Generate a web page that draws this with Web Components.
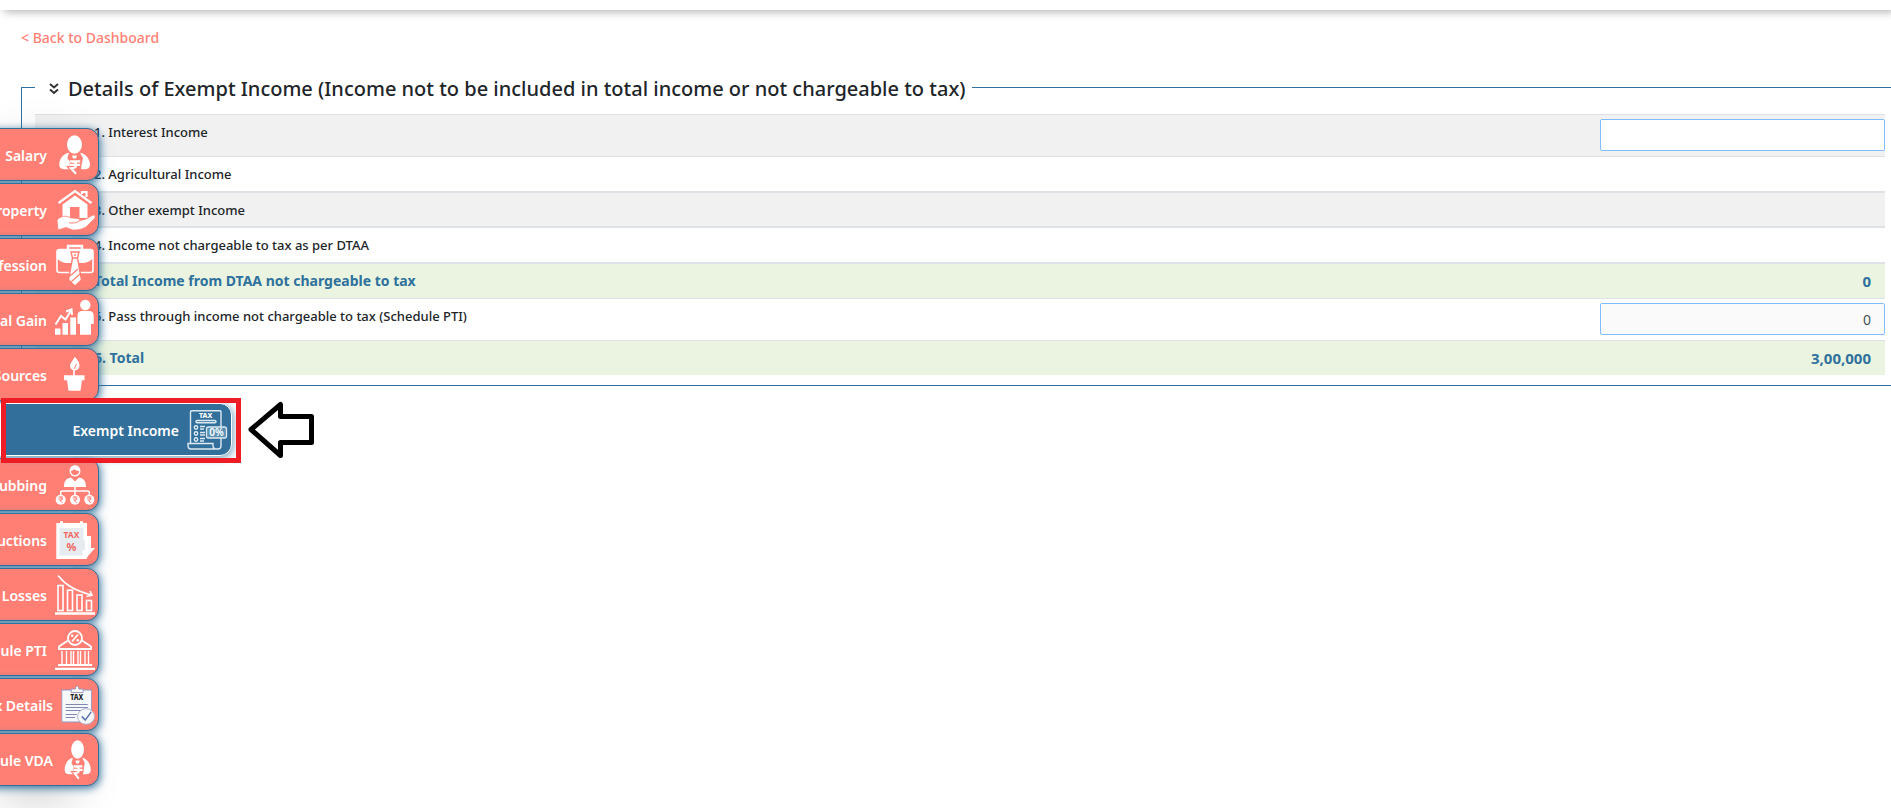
<!DOCTYPE html>
<html lang="en">
<head>
<meta charset="utf-8">
<meta name="viewport" content="width=device-width, initial-scale=1">
<title>Exempt Income</title>
<style>
  :root { --blue: #2f719d; --coral: #ff7f74; --ink: #212529; --line: #dee2e6; }
  body { margin: 0; background: #fff; color: var(--ink); font: 500 14px/20px "Noto Sans", "Open Sans", sans-serif; overflow-x: hidden; }
</style>
</head>
<body>
<tax-page>
  <top-strip slot="header"></top-strip>
  <back-link slot="back">&lt; Back to Dashboard</back-link>
  <income-section>
    <span slot="title">Details of Exempt Income (Income not to be included in total income or not chargeable to tax)</span>
    <income-table></income-table>
  </income-section>
  <side-nav slot="nav">
    <nav-tab icon="salary">Salary</nav-tab>
    <nav-tab icon="house">House Property</nav-tab>
    <nav-tab icon="business">Business/Profession</nav-tab>
    <nav-tab icon="gain">Capital Gain</nav-tab>
    <nav-tab icon="sources">Other Sources</nav-tab>
    <nav-tab icon="exempt" active>Exempt Income</nav-tab>
    <nav-tab icon="clubbing">Clubbing</nav-tab>
    <nav-tab icon="deductions">Deductions</nav-tab>
    <nav-tab icon="losses">Losses</nav-tab>
    <nav-tab icon="pti">Schedule PTI</nav-tab>
    <nav-tab icon="details" narrow>Tax Details</nav-tab>
    <nav-tab icon="salary" narrow>Schedule VDA</nav-tab>
  </side-nav>
</tax-page>

<script>
const define = (name, html, setup) => {
  const tpl = document.createElement('template');
  tpl.innerHTML = html;
  customElements.define(name, class extends HTMLElement {
    constructor() {
      super();
      this.attachShadow({ mode: 'open' }).append(tpl.content.cloneNode(true));
    }
    connectedCallback() { if (setup) setup(this, this.shadowRoot); }
  });
};

const ICONS = {
  salary: `
    <g fill="#fff"><ellipse cx="19.500" cy="9.500" rx="7.500" ry="9.300"/>
    <path d="M14 17.800C8 19 4.300 24 4.300 30c0 3 2.500 4.300 6 4.300h4l1-7-3-4zM25 17.800c6 1.200 10 6.200 10 12.200 0 3-2.500 4.300-6 4.300h-3l1-7 1-4z"/>
    <path d="M17 20.500h5l-1 3h-3z"/></g>
    <path d="M14.800 26.300h10.400M14.800 29.800h10.400M16 26.300c7 0 7 7 0 7l5 5.500" fill="none" stroke="#ff7f74" stroke-width="4.500"/>
    <path d="M14.800 26.300h10.400M14.800 29.800h10.400M16 26.300c7 0 7 7 0 7l5 5.500" fill="none" stroke="#fff" stroke-width="2.200"/>`,
  house: `
    <g fill="none" stroke="#fff" stroke-width="2.200"><path d="M3.500 13 20 1.200 36.500 13"/><path d="M27 4V2h4.500v5"/></g>
    <path fill="#fff" fill-rule="evenodd" d="M7.500 14.500 20 5.500l12.500 9V28h-25zM15 17v11h9.500V17z"/>
    <path fill="#fff" stroke="#ff7f74" stroke-width=".8" d="M2 30c4-4.500 9-4.500 13-2.500 3 1.500 10-.5 10 3l6-1.500 6-3.500c3-1.500 4 1 2.500 3l-8 8c-2 2-9 4-14 3.500L11 37.500 3 40z"/>
    <path d="M14 32.500c4 1.500 8 0 11-2" fill="none" stroke="#ff7f74"/>`,
  business: `
    <g fill="none" stroke="#fff" stroke-width="1.600"><rect x="2" y="4.500" width="36" height="23" rx="2.500"/><path d="M13 4.500V1h14v3.500" stroke-width="2.400"/></g>
    <path fill="#fff" d="M2 7c0-2 1-2.500 3-2.500h30c2 0 3 .5 3 2.500v6c-2 3-7 5-11 5H13C8 18 4 16 2 13z"/>
    <path fill="#fff" stroke="#ff7f74" stroke-width="1.400" d="m16 7 8 0-1.500 6 4 22-6.500 6-6.500-6 4-22z"/>
    <path fill="none" stroke="#ff7f74" stroke-width="1.300" d="M17.500 13h5M15 31l8-7M16 37l9-8"/><circle cx="20" cy="10" r="1" fill="#ff7f74"/>`,
  gain: `
    <g fill="#fff"><circle cx="30.300" cy="5" r="5.200"/><path d="M27 11h7q4.700 0 4.700 5v8H36v10.700h-11V24h-2.500v-8q0-5 4.500-5zM0 28.500h5.500v6.200H0zM7.500 23h5.500v11.700H7.500zM15.300 17.500H21v17.200h-5.700z"/></g>
    <path d="M.5 24.500 6 16l4.500 3.500L16 10.500M11 11.500l5.500-2 .5 5.500" fill="none" stroke="#fff" stroke-width="2"/>`,
  sources: `
    <g fill="#fff"><path d="M9 20.300h20.500v5H9zM12 25h15l-1.500 10.700h-12z"/><path d="M19.700 1.800c3.300 3.700 5 6.200 4.800 9-.2 3-2 4.600-4.800 4.600s-4.800-2-4.600-4.800c.2-3.200 3.600-5.600 4.600-8.800z"/></g>
    <path d="M19 21v-7l2.500-5" stroke="#fff" stroke-width="1.600" fill="none"/><path d="m19 14 2.500-5" stroke="#ff7f74" fill="none"/>`,
  exempt: `
    <g fill="none" stroke="#dce9f2" stroke-width="1.400"><path d="M3.500 33.500V2q0-1.300 1.300-1.300h28Q34 .7 34 2v15M34 27v9q0 3-3 3H4q-3 0-3-3.500v-2h25v2q0 3.500 3 3.500"/>
    <rect x="9" y="10.500" width="20" height="2.300" rx="1.100"/>
    <circle cx="9" cy="17.500" r="1.700"/><circle cx="9" cy="23.500" r="1.700"/><circle cx="9" cy="29.500" r="1.700"/>
    <path d="M13 16.500h5M13 19h4M13 22.500h5M13 25h5M13 28.500h5M13 31h4"/></g>
    <rect x="19.500" y="17" width="20" height="11" rx="2" fill="#5c91b5" stroke="#dce9f2" stroke-width="1.300"/>
    <text x="18.700" y="8.300" font-size="7" font-weight="800" text-anchor="middle" fill="#fff">TAX</text>
    <text x="29.500" y="26" font-size="10" font-weight="600" text-anchor="middle" fill="#fff">0%</text>`,
  clubbing: `
    <path fill="#fff" d="M9 22c0-6 2-8.500 7-9.500l4 4 4-4c5 1 7 3.500 7 9.500z"/>
    <circle cx="20" cy="6" r="4.800" fill="#ff7f74" stroke="#fff" stroke-width="1.400"/><path fill="#fff" d="M15 6c0-4 2-5.500 5-5.500S25 2 25 6c-3 0-5-1-6-2-1 1.500-2 2-4 2z"/>
    <path d="M20 21v9M5.700 30v-2.500q0-1.500 2-1.500h24.600q2 0 2 1.500V30M16 14l4 6 4-6" fill="none" stroke="#fff" stroke-width="1.500"/>
    <g fill="#fff"><circle cx="5.700" cy="34.800" r="5"/><circle cx="20" cy="34.800" r="5"/><circle cx="34.300" cy="34.800" r="5"/></g>
    <path d="M3.500 32h4.500M3.500 34h4.500M5 32c3 0 3 3.500 0 3.500l2.500 2.500M17.800 32h4.500M17.800 34h4.500M19.300 32c3 0 3 3.500 0 3.500l2.500 2.500M32 32h4.500M32 34h4.500M33.500 32c3 0 3 3.500 0 3.500L36 38" fill="none" stroke="#ff7f74"/>`,
  deductions: `
    <path fill="#fff" d="M1.300 3H5V1.300h3V3h17V1.300h3V3h4v13h4v12h4l-7 8-1.500 3H1.300z"/>
    <path fill="#e6ebf0" d="M4.500 8h24v12l1.500 1v9h-2.500v5.500h-23z"/>
    <g fill="#f0685f" text-anchor="middle" font-weight="700"><text x="16.500" y="18" font-size="8.500">TAX</text><text x="16.500" y="31" font-size="11">%</text></g>`,
  losses: `
    <g fill="none" stroke="#fff" stroke-width="1.600"><rect x="3" y="10.500" width="5" height="25"/><rect x="12.500" y="15.200" width="5" height="20.300"/><rect x="22" y="20" width="5" height="15.500"/><rect x="31.500" y="25.500" width="5" height="10"/>
    <path d="M3 .5c8 10 17 15 33 19.500M31.500 21.500 37 20.300 35 16"/></g>
    <path stroke="#fff" stroke-width="2.600" d="M0 38.500h40"/>`,
  pti: `
    <g fill="none" stroke="#fff" stroke-width="1.800"><path d="M13 10.500 4 16.500v2.500h32v-2.500l-9-6"/><circle cx="20" cy="8" r="7"/><path d="m17 11.500 6-7M3 35h34"/>
    <path d="M7 21v13M11.500 21v13M16 21v13M18.500 21v13M23 21v13M25.500 21v13M30 21v13M33.500 21v13" stroke-width="1.400"/></g>
    <circle cx="17.200" cy="5.800" r="1.300" fill="#fff"/><circle cx="22.800" cy="10.300" r="1.300" fill="#fff"/><path stroke="#fff" stroke-width="2.200" d="M0 38.800h40"/>`,
  details: `
    <rect x="1" y="5" width="35" height="32" fill="#f7f8fc" stroke="#9298bd" stroke-width="1"/>
    <path d="M12 7.500V4h5q0-3 2-3t2 3h5v3.500z" fill="#fff" stroke="#9298bd"/>
    <text x="18.500" y="15.500" font-size="8" font-weight="800" text-anchor="middle" fill="#222">TAX</text>
    <path d="M5.500 19.500h26M5.500 22.500h26M5.500 25.500h26M5.500 29.500h13M5.500 32.500h11" stroke="#8188b2" stroke-width="1.200"/>
    <ellipse cx="29.500" cy="31.500" rx="10" ry="7.800" fill="#f7f8fc" stroke="#a9aecb"/><path d="m24.500 31.500 4 3.500 7-8" fill="none" stroke="#5f79ad" stroke-width="1.700"/>`
};

define('tax-page', `
  <style>
    :host { display: block; position: relative; min-height: 100vh; overflow: hidden; }
    main { padding-left: 21px; margin-top: 18px; }
    .body { margin-top: 22px; }
  </style>
  <slot name="header"></slot>
  <main><slot name="back"></slot><div class="body"><slot></slot></div></main>
  <slot name="nav"></slot>`);

define('top-strip', `
  <style>:host { display: block; height: 10px; background: #fff; box-shadow: 4px 2px 8px rgba(0,0,0,.3); }</style>`);

define('back-link', `
  <style>:host { display: block; } a { color: var(--coral); text-decoration: none; }</style>
  <a href="#"><slot></slot></a>`);

define('income-section', `
  <style>
    :host { display: block; }
    fieldset { margin: 0 -8px 0 0; min-width: 0; border: 1px solid var(--blue); padding: 10px 13px 10px 13px; }
    legend { display: flex; align-items: center; gap: 9px; padding: 4px 7px 0 14px; font-size: 20px; line-height: 30px; }
    button { border: 0; padding: 0; background: none; color: inherit; display: flex; }
  </style>
  <fieldset>
    <legend>
      <button type="button" aria-label="Collapse section"><svg width="10" height="12" viewBox="0 0 10 12" fill="none" stroke="#333" stroke-width="2"><path d="m1 1 4 3.500L9 1M1 6.500 5 10l4-3.500"/></svg></button>
      <slot name="title"></slot>
    </legend>
    <slot></slot>
  </fieldset>`);

define('income-table', `
  <style>
    :host { display: block; }
    table { width: 100%; border-spacing: 0; border-collapse: separate; }
    th, td { padding: 7px 0; border-top: 1px solid var(--line); text-align: left; font-size: 13px; font-weight: 500; vertical-align: top; }
    th { padding-left: 59px; }
    td { width: 285px; }
    .thick th, .thick td { border-top-width: 2px; }
    .gray { background: #f1f1f1; }
    .gray.thick th, .gray.thick td { padding-bottom: 6px; }
    .total { background: #eaf4e0; color: var(--blue); }
    .total th, .total td { font-size: 14px; font-weight: 700; }
    .total td { font-size: 15px; text-align: right; padding-right: 14px; box-sizing: border-box; }
    .field td { padding: 4px 0 5px; }
    input { display: block; box-sizing: border-box; width: 100%; height: 32px; border: 1px solid #80bdff; border-radius: 2px;
      padding: 0 13px; background: #fff; color: #495057; font: 400 14px/20px "Noto Sans", sans-serif; text-align: right; }
    input[readonly] { background: #fafafa; }
  </style>
  <table>
    <tbody>
      <tr class="gray field"><th scope="row"><label for="interest">1. Interest Income</label></th><td><input id="interest" type="text"></td></tr>
      <tr><th scope="row">2. Agricultural Income</th><td></td></tr>
      <tr class="gray thick"><th scope="row">3. Other exempt Income</th><td></td></tr>
      <tr class="thick"><th scope="row">4. Income not chargeable to tax as per DTAA</th><td></td></tr>
      <tr class="total thick"><th scope="row">Total Income from DTAA not chargeable to tax</th><td>0</td></tr>
      <tr class="field"><th scope="row"><label for="pti">5. Pass through income not chargeable to tax (Schedule PTI)</label></th><td><input id="pti" type="text" value="0" readonly></td></tr>
      <tr class="total"><th scope="row">6. Total</th><td>3,00,000</td></tr>
    </tbody>
  </table>`);

define('side-nav', `
  <style>
    :host { position: absolute; left: 0; top: 128px; width: 73px; box-shadow: 0 16px 48px rgba(0,0,0,.18); }
    nav { display: flex; flex-direction: column; gap: 2px; }
  </style>
  <nav aria-label="Schedules"><slot></slot></nav>`);

define('nav-tab', `
  <style>
    :host { display: block; position: relative; width: 232px; margin-left: -133px; }
    a { display: flex; align-items: center; justify-content: flex-end; gap: 8px; box-sizing: border-box; height: 53px; padding-right: 3px;
      border: 1px solid var(--blue); border-radius: 0 12px 12px 0; background: var(--coral); color: #fff;
      box-shadow: 1px 2px 8px var(--blue); font-weight: 600; text-decoration: none; white-space: nowrap; }
    .label { padding-top: 2px; }
    svg.icon { width: 40px; height: 40px; flex: none; overflow: visible; }
    :host([narrow]) svg.icon { width: 34px; }
    :host([active]) { margin-left: 0; z-index: 1; }
    :host([active]) a { background: #32709b; border-color: #fff; padding-right: 4px; box-shadow: 1px 2px 8px #6f9cba; }
    .mark { display: none; }
    :host([active]) .mark { display: block; position: absolute; left: 1px; top: -5px; overflow: visible; pointer-events: none; }
  </style>
  <a href="#"><span class="label"><slot></slot></span><svg class="icon" viewBox="0 0 40 40" preserveAspectRatio="none" aria-hidden="true"></svg></a>
  <svg class="mark" width="314" height="65" viewBox="0 0 314 65" fill="none" aria-hidden="true">
    <rect x="2.500" y="2.500" width="235" height="60" stroke="#ee1c25" stroke-width="5"/>
    <path d="M250 31.500 279.500 6.500V18.500H310.500V44.500H279.500V57.500Z" fill="#fff" stroke="#000" stroke-width="5" stroke-linejoin="round"/>
  </svg>`, (el, root) => {
    root.querySelector('.icon').innerHTML = ICONS[el.getAttribute('icon')] || '';
    if (el.hasAttribute('active')) root.querySelector('a').setAttribute('aria-current', 'page');
  });
</script>
</body>
</html>
